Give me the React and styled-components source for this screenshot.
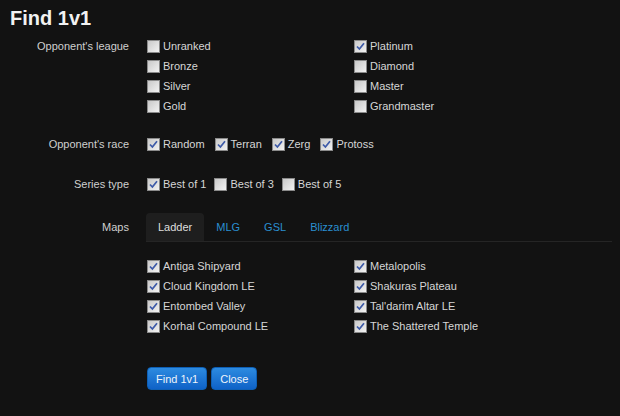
import React, { useState } from 'react'
import styled, { createGlobalStyle } from 'styled-components'

const leagues = ['Unranked', 'Platinum', 'Bronze', 'Diamond', 'Silver', 'Master', 'Gold', 'Grandmaster']
const races = ['Random', 'Terran', 'Zerg', 'Protoss']
const series = ['Best of 1', 'Best of 3', 'Best of 5']
const tabs = ['Ladder', 'MLG', 'GSL', 'Blizzard']
const maps = [
    'Antiga Shipyard', 'Metalopolis',
    'Cloud Kingdom LE', 'Shakuras Plateau',
    'Entombed Valley', "Tal'darim Altar LE",
    'Korhal Compound LE', 'The Shattered Temple',
]

const Check = ({ label, checked, onToggle }) => (
    <CheckLabel onClick={onToggle}>
        <Box>
            {checked && (
                <svg width="9" height="9" viewBox="0 0 9 9">
                    <path d="M1 4.5 L3.4 7 L8 1.2" fill="none" stroke="#3d5aa8" strokeWidth="1.7" />
                </svg>
            )}
        </Box>
        {label}
    </CheckLabel>
)

export default function App() {
    const [checked, setChecked] = useState(() => ({
        Platinum: true,
        Random: true, Terran: true, Zerg: true, Protoss: true,
        'Best of 1': true,
        ...Object.fromEntries(maps.map(m => [m, true])),
    }))
    const [tab, setTab] = useState('Ladder')
    const toggle = key => setChecked(c => ({ ...c, [key]: !c[key] }))

    return (
        <>
            <GlobalStyle />
            <Page>
                <Title>Find 1v1</Title>
                <Field $gap={0}>
                    <Label>Opponent's league</Label>
                    <Grid>
                        {leagues.map(l => (
                            <Check key={l} label={l} checked={!!checked[l]} onToggle={() => toggle(l)} />
                        ))}
                    </Grid>
                </Field>
                <Field $gap={18}>
                    <Label>Opponent's race</Label>
                    <Inline>
                        {races.map(r => (
                            <Check key={r} label={r} checked={!!checked[r]} onToggle={() => toggle(r)} />
                        ))}
                    </Inline>
                </Field>
                <Field $gap={20}>
                    <Label>Series type</Label>
                    <Inline $tight>
                        {series.map(s => (
                            <Check key={s} label={s} checked={!!checked[s]} onToggle={() => toggle(s)} />
                        ))}
                    </Inline>
                </Field>
                <Field $gap={19}>
                    <Label $tab>Maps</Label>
                    <MapsBlock>
                        <Tabs>
                            {tabs.map(t => (
                                <Tab key={t} $active={t === tab} onClick={() => setTab(t)}>{t}</Tab>
                            ))}
                        </Tabs>
                        <Grid $top={14}>
                            {maps.map(m => (
                                <Check key={m} label={m} checked={!!checked[m]} onToggle={() => toggle(m)} />
                            ))}
                        </Grid>
                    </MapsBlock>
                </Field>
                <Actions>
                    <Button>Find 1v1</Button>
                    <Button>Close</Button>
                </Actions>
            </Page>
        </>
    )
}

const GlobalStyle = createGlobalStyle`
    html, body {
        margin: 0;
        background: #121212;
        font-family: "Liberation Sans", Arial, sans-serif;
        font-size: 11px;
        color: #d6d6d6;
    }
`

const Page = styled.div`
    width: 620px;
    height: 416px;
    overflow: hidden;
`

const Title = styled.h1`
    margin: 0;
    padding: 6px 0 0 10px;
    height: 36px;
    box-sizing: border-box;
    font-size: 20px;
    line-height: 24px;
    font-weight: bold;
    color: #f2f2f2;
`

const Field = styled.div`
    display: flex;
    margin-top: ${p => p.$gap}px;
`

const Label = styled.div`
    width: 129px;
    margin-right: 18px;
    text-align: right;
    line-height: ${p => (p.$tab ? '28px' : '20px')};
    color: #cfcfcf;
    flex-shrink: 0;
`

const Grid = styled.div`
    display: grid;
    grid-template-columns: 207px 207px;
    grid-auto-rows: 20px;
    margin-top: ${p => p.$top || 0}px;
`

const Inline = styled.div`
    display: flex;
    gap: ${p => (p.$tight ? '8px' : '10px')};
    height: 20px;
`

const CheckLabel = styled.label`
    display: flex;
    align-items: center;
    gap: 3px;
    line-height: 20px;
    color: #d6d6d6;
    cursor: pointer;
    white-space: nowrap;
`

const Box = styled.span`
    width: 11px;
    height: 11px;
    border: 1px solid #8a8a8a;
    background: linear-gradient(135deg, #c9c9c9, #f2f2f2);
    display: flex;
    align-items: center;
    justify-content: center;
    flex-shrink: 0;
`

const MapsBlock = styled.div`
    display: flex;
    flex-direction: column;
`

const Tabs = styled.div`
    display: flex;
    width: 466px;
    margin-left: -1px;
    border-bottom: 1px solid #252525;
`

const Tab = styled.div`
    height: 28px;
    line-height: 28px;
    padding: 0 12px;
    border-radius: 4px 4px 0 0;
    background: ${p => (p.$active ? '#1e1e1e' : 'transparent')};
    color: ${p => (p.$active ? '#dedede' : '#2a8fd0')};
    cursor: pointer;
`

const Actions = styled.div`
    display: flex;
    gap: 4px;
    margin: 31px 0 0 147px;
`

const Button = styled.button`
    height: 23px;
    padding: 0 8px;
    border: 1px solid #0d5fb5;
    border-radius: 4px;
    background: linear-gradient(to bottom, #2d8be0, #0f62c7);
    color: #eef4fb;
    font-family: "Liberation Sans", Arial, sans-serif;
    font-size: 11px;
    cursor: pointer;
`
